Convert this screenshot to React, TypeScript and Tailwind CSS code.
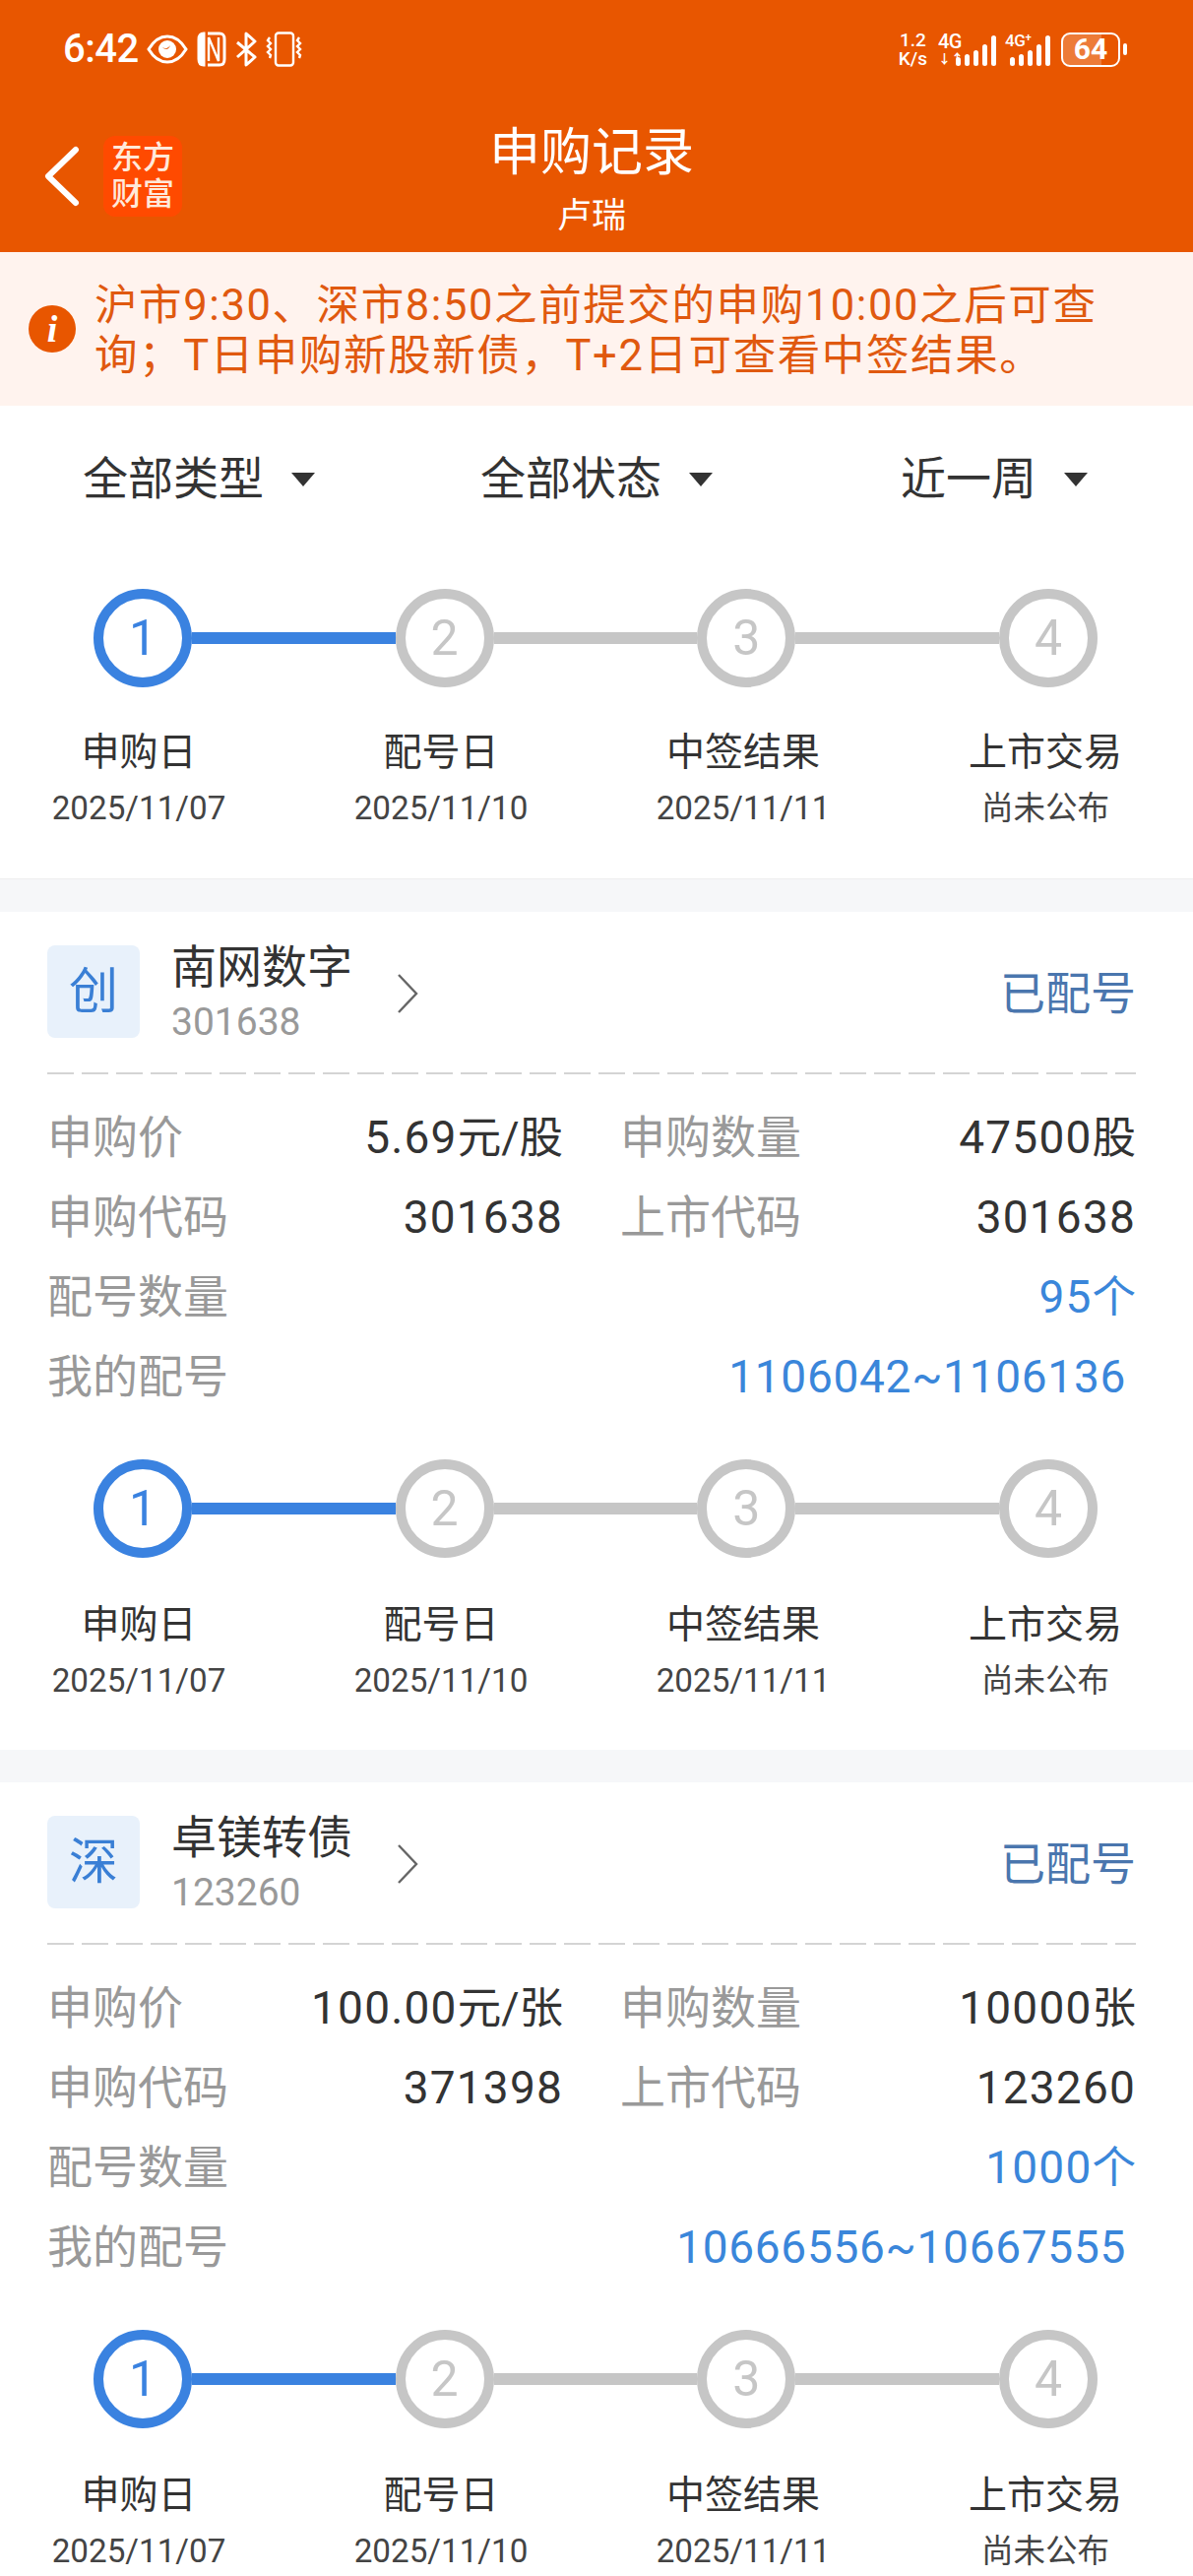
import React from "react";

const steps = [
  { label: "申购日", date: "2025/11/07" },
  { label: "配号日", date: "2025/11/10" },
  { label: "中签结果", date: "2025/11/11" },
  { label: "上市交易", date: "尚未公布", pending: true },
];

const records = [
  {
    tag: "创",
    name: "南网数字",
    code: "301638",
    price: "5.69元/股",
    amount: "47500股",
    buyCode: "301638",
    listCode: "301638",
    count: "95个",
    range: "1106042~1106136",
  },
  {
    tag: "深",
    name: "卓镁转债",
    code: "123260",
    price: "100.00元/张",
    amount: "10000张",
    buyCode: "371398",
    listCode: "123260",
    count: "1000个",
    range: "10666556~10667555",
  },
];

const StepCircle = ({ n, active }: { n: number; active?: boolean }) => (
  <div
    className={`flex h-[100px] w-[100px] shrink-0 items-center justify-center rounded-full border-[10px] bg-white text-[50px] ${
      active ? "border-[#3a82e0] text-[#3a82e0]" : "border-[#c6c6c6] text-[#c6c6c6]"
    }`}
  >
    {n}
  </div>
);

const Stepper = ({ labelGap = 42 }: { labelGap?: number }) => (
  <div>
    <div className="flex items-center pl-[95px] pr-[97px]">
      <StepCircle n={1} active />
      <div className="h-[12px] flex-1 bg-[#3a82e0]" />
      <StepCircle n={2} />
      <div className="h-[12px] flex-1 bg-[#c6c6c6]" />
      <StepCircle n={3} />
      <div className="h-[12px] flex-1 bg-[#c6c6c6]" />
      <StepCircle n={4} />
    </div>
    <div className="flex justify-between pl-[41px] pr-[50px]" style={{ marginTop: labelGap }}>
      {steps.map((s) => (
        <div key={s.label} className="flex w-[200px] flex-col items-center">
          <div className="text-[39px] leading-[48px] text-[#333]">{s.label}</div>
          <div
            className={`mt-[9px] leading-[48px] text-[#444] ${
              s.pending ? "text-[32.5px]" : "text-[33.2px]"
            }`}
          >
            {s.date}
          </div>
        </div>
      ))}
    </div>
  </div>
);

const Filter = ({ label }: { label: string }) => (
  <div className="flex items-center justify-center gap-[28px]">
    <span className="text-[46px] leading-[60px] text-[#333]">{label}</span>
    <span className="mt-[2px] h-0 w-0 border-x-[12px] border-t-[14px] border-x-transparent border-t-[#333]" />
  </div>
);

// number in wide tracking, unit after it in a slightly smaller size
const Value = ({ text, className }: { text: string; className: string }) => {
  const m = text.match(/^([\d.]+)(.*)$/);
  return (
    <span className={`text-[46px] ${className}`}>
      <span className="tracking-[1.2px]">{m ? m[1] : text}</span>
      {m && m[2] ? <span className="text-[44.5px]">{m[2]}</span> : null}
    </span>
  );
};

const Row = ({
  leftLabel,
  leftValue,
  rightLabel,
  rightValue,
}: {
  leftLabel: string;
  leftValue: string;
  rightLabel: string;
  rightValue: string;
}) => (
  <div className="flex h-[81px] items-center">
    <div className="flex w-[524px] items-center justify-between">
      <span className="text-[46px] text-[#999]">{leftLabel}</span>
      <Value text={leftValue} className="text-[#333]" />
    </div>
    <div className="ml-[58px] flex flex-1 items-center justify-between">
      <span className="text-[46px] text-[#999]">{rightLabel}</span>
      <Value text={rightValue} className="text-[#333]" />
    </div>
  </div>
);

const RecordCard = ({ r }: { r: (typeof records)[number] }) => (
  <section className="mt-[33px] h-[851px] shrink-0 bg-white pt-[34px]">
    <div className="flex h-[94px] items-center pl-[48px] pr-[58px]">
      <div className="flex h-[94px] w-[94px] items-center justify-center rounded-[8px] bg-[#e8f1fb] text-[50px] text-[#3a7fd5]">
        {r.tag}
      </div>
      <div className="ml-[32px] flex flex-col">
        <span className="text-[46px] leading-[58px] text-[#333]">{r.name}</span>
        <span className="mt-[4px] text-[39px] leading-[46px] text-[#999]">{r.code}</span>
      </div>
      <svg className="ml-[45px] mt-[4px]" width="22" height="42" viewBox="0 0 22 42" fill="none">
        <path d="M2 2l18 19L2 40" stroke="#666" strokeWidth="2.4" />
      </svg>
      <span className="ml-auto mt-[5px] text-[46px] text-[#4a76ae]">已配号</span>
    </div>
    <div className="ml-[48px] mr-[58px] mt-[35px] h-[2px] bg-[repeating-linear-gradient(90deg,#d4d4d4_0_27px,transparent_27px_35px)]" />
    <div className="pl-[48px] pr-[58px] pt-[24px]">
      <Row leftLabel="申购价" leftValue={r.price} rightLabel="申购数量" rightValue={r.amount} />
      <Row leftLabel="申购代码" leftValue={r.buyCode} rightLabel="上市代码" rightValue={r.listCode} />
      <div className="flex h-[81px] items-center justify-between">
        <span className="text-[46px] text-[#999]">配号数量</span>
        <Value text={r.count} className="text-[#3a86da]" />
      </div>
      <div className="flex h-[81px] items-center justify-between pr-[10px]">
        <span className="text-[46px] text-[#999]">我的配号</span>
        <span className="text-[46px] tracking-[0.7px] text-[#3a86da]">{r.range}</span>
      </div>
    </div>
    <div className="mt-[43px]">
      <Stepper labelGap={44} />
    </div>
  </section>
);

// status bar glyphs
const EyeIcon = () => (
  <svg width="42" height="32" viewBox="0 0 42 32" fill="none">
    <path d="M2 16C8 6 14 3 21 3s13 3 19 13c-6 10-12 13-19 13S8 26 2 16Z" stroke="white" strokeWidth="3" />
    <circle cx="21" cy="16" r="9" fill="white" />
    <path d="M15 13c3 3 6 3 9-1-1 4-5 6-9 1Z" fill="#e85600" />
  </svg>
);

const NfcIcon = () => (
  <svg width="30" height="36" viewBox="0 0 30 36" fill="none" stroke="white" strokeWidth="3">
    <path d="M7 2C3 2 2 4 2 8v20c0 4 1 6 5 6Z" fill="white" />
    <path d="M11 2h12c4 0 5 2 5 6v20c0 4-1 6-5 6H11" />
    <path d="M12 30V6l10 24V6" strokeWidth="2.4" />
  </svg>
);

const BluetoothIcon = () => (
  <svg width="22" height="36" viewBox="0 0 22 36" fill="none" stroke="white" strokeWidth="3" strokeLinejoin="round">
    <path d="M2 11l18 15-9 8V2l9 8L2 26" />
  </svg>
);

const VibrateIcon = () => (
  <svg width="38" height="36" viewBox="0 0 38 36" fill="none" stroke="white" strokeWidth="2.4">
    <rect x="10" y="1.5" width="18" height="33" rx="3" />
    <path d="M4 6L2 9l3 3-3 3 3 3-3 3 3 3-1 3" />
    <path d="M34 6l-2 3 3 3-3 3 3 3-3 3 3 3-1 3" />
  </svg>
);

const SignalBars = () => (
  <div className="flex items-end gap-[4px]">
    {[9, 12, 16, 22, 31].map((h, i) => (
      <span key={i} className="w-[5px] rounded-full bg-white" style={{ height: h }} />
    ))}
  </div>
);

const StatusBar = () => (
  <div className="flex h-[100px] items-center pl-[64px] pr-[67px] text-white">
    <span className="text-[40px] font-medium leading-none tracking-[-0.5px]">6:42</span>
    <div className="ml-[8px] flex items-center gap-[9px]">
      <EyeIcon />
      <NfcIcon />
      <BluetoothIcon />
      <VibrateIcon />
    </div>
    <div className="ml-auto flex items-center">
      <div className="flex flex-col items-center text-[19px] font-medium leading-[19px]">
        <span>1.2</span>
        <span>K/s</span>
      </div>
      <div className="relative ml-[11px] flex h-[33px] w-[59px] items-end justify-end">
        <span className="absolute left-0 top-0 text-[20px] font-medium leading-[16px] tracking-[-0.5px]">4G</span>
        <span className="absolute bottom-0 left-0 text-[13px] font-bold leading-[14px]">↓↑</span>
        <SignalBars />
      </div>
      <div className="relative ml-[9px] flex h-[33px] w-[46px] items-end justify-end">
        <span className="absolute left-0 top-0 text-[17px] font-medium leading-[14px] tracking-[-0.5px]">4G⁺</span>
        <SignalBars />
      </div>
      <div className="ml-[11px] flex items-center">
        <div className="flex h-[35px] w-[60px] items-center justify-center overflow-hidden rounded-[9px] border-2 border-white bg-[linear-gradient(90deg,rgba(255,255,255,0.22)_70%,transparent_70%)] text-[30px] font-bold leading-none">
          64
        </div>
        <span className="ml-[3px] h-[12px] w-[4px] rounded-full bg-white" />
      </div>
    </div>
  </div>
);

const App = () => {
  return (
    <main className="flex h-[2616px] w-[1212px] flex-col overflow-hidden bg-[#f6f7f9] font-['Roboto','Noto_Sans_CJK_SC',sans-serif]">
      <header className="h-[256px] shrink-0 bg-[#e85600] text-white">
        <StatusBar />
        <div className="flex h-[156px] items-start pl-[44px] pt-[25px]">
          <svg className="mt-[23px]" width="38" height="62" viewBox="0 0 38 62" fill="none">
            <path d="M33 4L5 31l28 27" stroke="white" strokeWidth="6" strokeLinecap="round" strokeLinejoin="round" />
          </svg>
          <div className="ml-[23px] mt-[13px] flex h-[82px] w-[80px] flex-col items-center justify-center rounded-[12px] bg-[#ff4a00] text-[32px] font-medium leading-[37px] text-[#ffe9da]">
            <span>东方</span>
            <span>财富</span>
          </div>
          <div className="ml-[312px] flex w-[208px] flex-col items-center">
            <span className="whitespace-nowrap text-[52px] leading-[62px]">申购记录</span>
            <span className="mt-[11px] text-[35px] leading-[44px]">卢瑞</span>
          </div>
        </div>
      </header>

      <div className="flex h-[156px] shrink-0 items-center bg-[#fff3ee] pl-[29px] pr-[70px]">
        <span className="flex h-[48px] w-[48px] shrink-0 items-center justify-center rounded-full bg-[#e85600] font-['Liberation_Serif',serif] text-[38px] font-bold italic leading-none text-white">
          i
        </span>
        <p className="ml-[19px] pt-[3px] text-[43.5px] leading-[51px] tracking-[1.6px] text-[#e0590f]">
          沪市9:30、深市8:50之前提交的申购10:00之后可查询；T日申购新股新债，T+2日可查看中签结果。
        </p>
      </div>

      <section className="h-[481px] shrink-0 border-b border-[#eee] bg-white">
        <div className="grid h-[148px] grid-cols-3 items-center">
          <Filter label="全部类型" />
          <Filter label="全部状态" />
          <Filter label="近一周" />
        </div>
        <div className="mt-[38px]">
          <Stepper />
        </div>
      </section>

      {records.map((r) => (
        <RecordCard key={r.code} r={r} />
      ))}
    </main>
  );
};

export default App;
